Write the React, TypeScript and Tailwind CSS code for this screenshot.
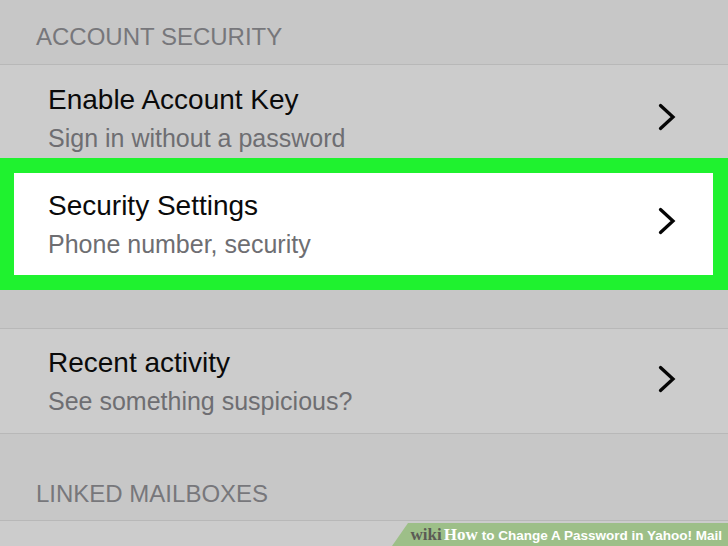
import React from 'react';

interface RowProps {
  title: string;
  subtitle: string;
  className?: string;
  chevronClass?: string;
}

// Chevron à direita de cada linha
const Chevron = ({ className = '' }: { className?: string }) => (
  <svg width="18" height="28" viewBox="0 0 18 28" className={className}>
    <polyline points="2.5,2.5 15,14 2.5,25.5" fill="none" stroke="#050505" strokeWidth="3.3" strokeLinecap="round" strokeLinejoin="miter" />
  </svg>
);

const Row = ({ title, subtitle, className = '', chevronClass = '' }: RowProps) => (
  <div className={`flex justify-between items-start ${className}`}>
    <div className="flex flex-col">
      <span className="text-[28px] leading-[34px] text-[#0a0a0a]">{title}</span>
      <span className="mt-[6px] text-[25px] leading-[30px] text-[#6e6e72]">{subtitle}</span>
    </div>
    <Chevron className={chevronClass} />
  </div>
);

const SectionHeader = ({ label, className = '' }: { label: string; className?: string }) => (
  <div className={`bg-[#c7c7c7] pl-[36px] border-b border-[#b8b8b8] ${className}`}>
    <span className="block text-[24px] leading-[28px] text-[#77777b]">{label}</span>
  </div>
);

export default function App() {
  return (
    <div
      className="relative w-full h-[546px] overflow-hidden bg-[#cccccc]"
      style={{ fontFamily: '"Liberation Sans", Arial, sans-serif' }}
    >
      <SectionHeader label="ACCOUNT SECURITY" className="h-[65px] pt-[23px]" />

      <Row
        title="Enable Account Key"
        subtitle="Sign in without a password"
        className="h-[93px] pt-[18px] pl-[48px] pr-[52px] bg-[#cccccc]"
        chevronClass="mt-[20px]"
      />

      {/* Destaque verde */}
      <div className="h-[132px] border-[15px] border-l-[14px] border-[#1ff22f] bg-white">
        <Row
          title="Security Settings"
          subtitle="Phone number, security"
          className="pt-[16px] pl-[34px] pr-[37px]"
          chevronClass="mt-[18px]"
        />
      </div>

      <div className="h-[39px] bg-[#c7c7c7] border-b border-[#b8b8b8]" />

      <Row
        title="Recent activity"
        subtitle="See something suspicious?"
        className="h-[105px] pt-[17px] pl-[48px] pr-[52px] border-b border-[#b8b8b8] bg-[#cccccc]"
        chevronClass="mt-[19px]"
      />

      <SectionHeader label="LINKED MAILBOXES" className="h-[87px] pt-[46px]" />

      <div className="h-[30px] bg-[#cccccc]" />

      {/* Marca d'água */}
      <div className="absolute bottom-0 right-0 h-[23px] w-[338px] flex items-center justify-end pr-[6px]">
        <svg className="absolute inset-0" width="338" height="23" viewBox="0 0 338 23" preserveAspectRatio="none">
          <polygon points="18,0 338,0 338,23 2,23" fill="#9dbf88" />
        </svg>
        <div className="relative flex items-baseline whitespace-nowrap">
          <span className="text-[17px] font-bold text-[#5b5b55]" style={{ fontFamily: '"Liberation Serif", serif' }}>wiki</span>
          <span className="ml-[2px] text-[17px] font-bold text-white" style={{ fontFamily: '"Liberation Serif", serif' }}>How</span>
          <span className="ml-[4px] text-[13.5px] font-bold text-white">to Change A Password in Yahoo! Mail</span>
        </div>
      </div>
    </div>
  );
}
